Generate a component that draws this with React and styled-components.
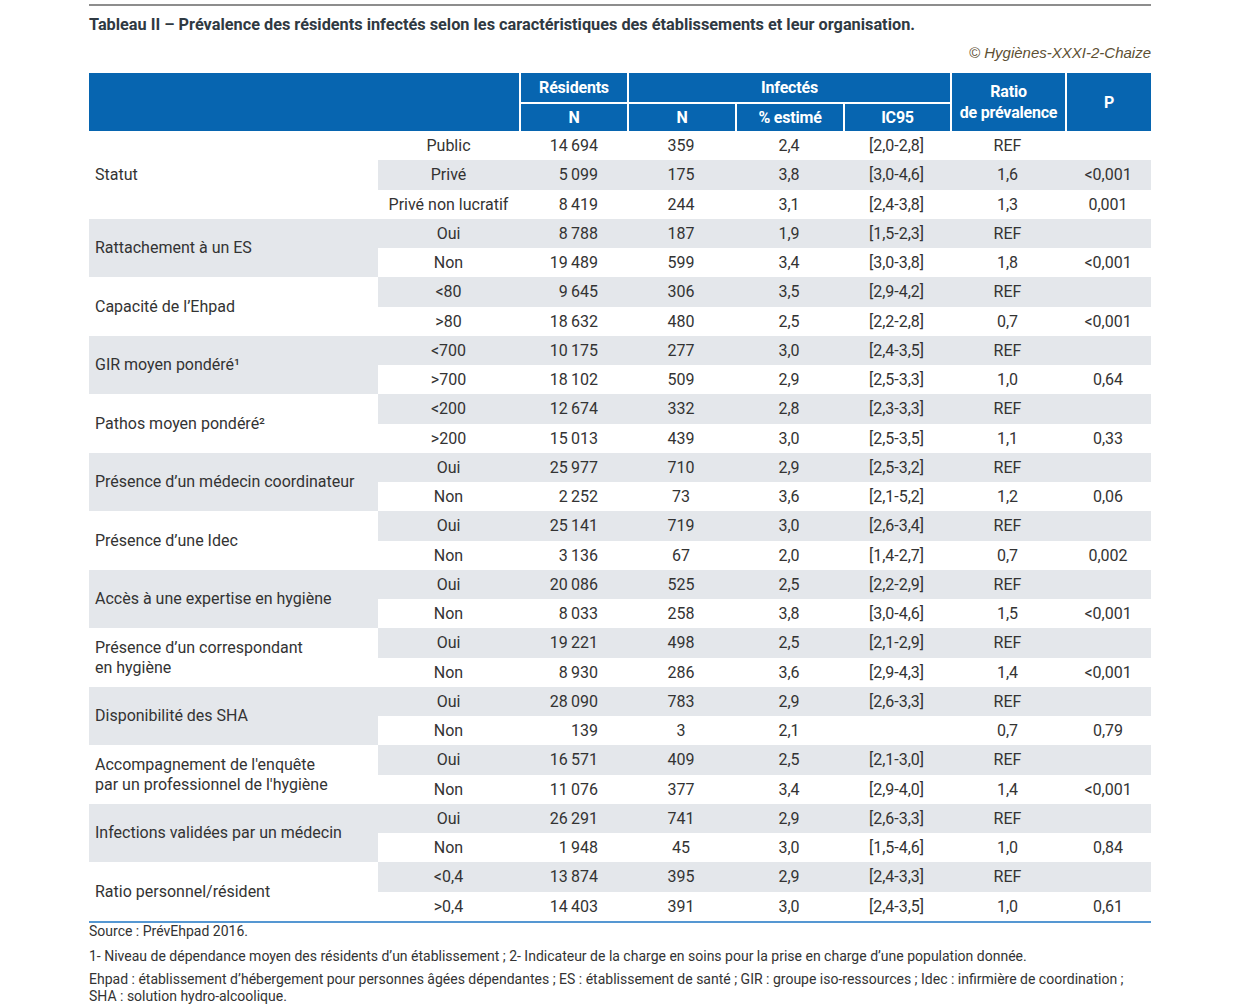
import styled, { createGlobalStyle } from "styled-components";

const GlobalStyle = createGlobalStyle`
    body {
        margin: 0;
        background: #fff;
        font-family: Roboto, "Noto Sans", sans-serif;
        color: #333;
    }
`

const BLUE = '#0765b0';
const BAND = '#e4e7eb';

const Page = styled.div`
    width: 1062px;
    margin-left: 89px;
    padding-top: 4px;
`

const TopRule = styled.div`
    height: 2px;
    background: #8d8d8d;
`

const Title = styled.h1`
    margin: 9px 0 0;
    font-size: 16.3px;
    line-height: 20px;
    font-weight: 700;
    color: #2f3942;
`

const Credit = styled.div`
    margin-top: 9px;
    text-align: right;
    font-family: "Liberation Sans", Arial, sans-serif;
    font-style: italic;
    font-size: 15px;
    line-height: 18px;
    color: #5d5033;
`

const Table = styled.table`
    margin-top: 11px;
    width: 1062px;
    table-layout: fixed;
    border-collapse: separate;
    border-spacing: 0;
    border-bottom: 2px solid #5597d2;
`

const Head = styled.th`
    background: ${BLUE};
    color: #fff;
    font-size: 16px;
    line-height: 21px;
    font-weight: 700;
    text-align: center;
    height: 29px;
    padding: 0 4px;
    box-sizing: border-box;
    border-left: ${p => p.$first ? 'none' : '2px solid #fff'};
    border-top: ${p => p.$sub ? '2px solid #fff' : 'none'};
    letter-spacing: -0.2px;
`

const Label = styled.td`
    background: ${p => p.$band ? BAND : '#fff'};
    padding: 0 6px;
    font-size: 16px;
    line-height: 20px;
    vertical-align: middle;
    text-align: left;
`

const Cell = styled.td`
    background: ${p => p.$band ? BAND : '#fff'};
    height: 29.25px;
    padding: ${p => p.$right ? '1px 29px 0 0' : '1px 0 0'};
    font-size: 16px;
    line-height: 20px;
    text-align: ${p => p.$right ? 'right' : 'center'};
    white-space: nowrap;
    box-sizing: border-box;
`

const Notes = styled.div`
    font-size: 14px;
    line-height: 17px;
    color: #333;
`

const Note = styled.p`
    margin: ${p => p.$gap}px 0 0;
`

const groups = [
    { label: ['Statut'], rows: [
        ['Public', '14 694', '359', '2,4', '[2,0-2,8]', 'REF', ''],
        ['Privé', '5 099', '175', '3,8', '[3,0-4,6]', '1,6', '<0,001'],
        ['Privé non lucratif', '8 419', '244', '3,1', '[2,4-3,8]', '1,3', '0,001'],
    ] },
    { label: ['Rattachement à un ES'], rows: [
        ['Oui', '8 788', '187', '1,9', '[1,5-2,3]', 'REF', ''],
        ['Non', '19 489', '599', '3,4', '[3,0-3,8]', '1,8', '<0,001'],
    ] },
    { label: ['Capacité de l’Ehpad'], rows: [
        ['<80', '9 645', '306', '3,5', '[2,9-4,2]', 'REF', ''],
        ['>80', '18 632', '480', '2,5', '[2,2-2,8]', '0,7', '<0,001'],
    ] },
    { label: ['GIR moyen pondéré¹'], rows: [
        ['<700', '10 175', '277', '3,0', '[2,4-3,5]', 'REF', ''],
        ['>700', '18 102', '509', '2,9', '[2,5-3,3]', '1,0', '0,64'],
    ] },
    { label: ['Pathos moyen pondéré²'], rows: [
        ['<200', '12 674', '332', '2,8', '[2,3-3,3]', 'REF', ''],
        ['>200', '15 013', '439', '3,0', '[2,5-3,5]', '1,1', '0,33'],
    ] },
    { label: ['Présence d’un médecin coordinateur'], rows: [
        ['Oui', '25 977', '710', '2,9', '[2,5-3,2]', 'REF', ''],
        ['Non', '2 252', '73', '3,6', '[2,1-5,2]', '1,2', '0,06'],
    ] },
    { label: ['Présence d’une Idec'], rows: [
        ['Oui', '25 141', '719', '3,0', '[2,6-3,4]', 'REF', ''],
        ['Non', '3 136', '67', '2,0', '[1,4-2,7]', '0,7', '0,002'],
    ] },
    { label: ['Accès à une expertise en hygiène'], rows: [
        ['Oui', '20 086', '525', '2,5', '[2,2-2,9]', 'REF', ''],
        ['Non', '8 033', '258', '3,8', '[3,0-4,6]', '1,5', '<0,001'],
    ] },
    { label: ['Présence d’un correspondant', 'en hygiène'], rows: [
        ['Oui', '19 221', '498', '2,5', '[2,1-2,9]', 'REF', ''],
        ['Non', '8 930', '286', '3,6', '[2,9-4,3]', '1,4', '<0,001'],
    ] },
    { label: ['Disponibilité des SHA'], rows: [
        ['Oui', '28 090', '783', '2,9', '[2,6-3,3]', 'REF', ''],
        ['Non', '139', '3', '2,1', '', '0,7', '0,79'],
    ] },
    { label: ['Accompagnement de l\'enquête', 'par un professionnel de l\'hygiène'], rows: [
        ['Oui', '16 571', '409', '2,5', '[2,1-3,0]', 'REF', ''],
        ['Non', '11 076', '377', '3,4', '[2,9-4,0]', '1,4', '<0,001'],
    ] },
    { label: ['Infections validées par un médecin'], rows: [
        ['Oui', '26 291', '741', '2,9', '[2,6-3,3]', 'REF', ''],
        ['Non', '1 948', '45', '3,0', '[1,5-4,6]', '1,0', '0,84'],
    ] },
    { label: ['Ratio personnel/résident'], rows: [
        ['<0,4', '13 874', '395', '2,9', '[2,4-3,3]', 'REF', ''],
        ['>0,4', '14 403', '391', '3,0', '[2,4-3,5]', '1,0', '0,61'],
    ] },
]

const thin = s => s.replace(' ', '\u2009');

const App = () => {
    let rowIndex = 0;

    return (
        <Page>
            <GlobalStyle />
            <TopRule />
            <Title>Tableau II – Prévalence des résidents infectés selon les caractéristiques des établissements et leur organisation.</Title>
            <Credit>© Hygiènes-XXXI-2-Chaize</Credit>
            <Table>
                <colgroup>
                    <col style={{ width: 289 }} />
                    <col style={{ width: 141 }} />
                    <col style={{ width: 108 }} />
                    <col style={{ width: 108 }} />
                    <col style={{ width: 108 }} />
                    <col style={{ width: 107 }} />
                    <col style={{ width: 115 }} />
                    <col style={{ width: 86 }} />
                </colgroup>
                <thead>
                    <tr>
                        <Head $first colSpan={2} rowSpan={2}></Head>
                        <Head>Résidents</Head>
                        <Head colSpan={3}>Infectés</Head>
                        <Head rowSpan={2}>Ratio<br />de prévalence</Head>
                        <Head rowSpan={2}>P</Head>
                    </tr>
                    <tr>
                        <Head $sub>N</Head>
                        <Head $sub>N</Head>
                        <Head $sub>% estimé</Head>
                        <Head $sub>IC95</Head>
                    </tr>
                </thead>
                <tbody>
                    {groups.map((g, gi) => g.rows.map((r, ri) => {
                        const band = rowIndex++ % 2 === 1;
                        return (
                            <tr key={gi + '-' + ri}>
                                {ri === 0 && (
                                    <Label rowSpan={g.rows.length} $band={gi % 2 === 1}>
                                        {g.label.map((line, li) => <div key={li}>{line}</div>)}
                                    </Label>
                                )}
                                <Cell $band={band}>{r[0]}</Cell>
                                <Cell $band={band} $right>{thin(r[1])}</Cell>
                                <Cell $band={band}>{r[2]}</Cell>
                                <Cell $band={band}>{r[3]}</Cell>
                                <Cell $band={band}>{r[4]}</Cell>
                                <Cell $band={band}>{r[5]}</Cell>
                                <Cell $band={band}>{r[6]}</Cell>
                            </tr>
                        )
                    }))}
                </tbody>
            </Table>
            <Notes>
                <Note $gap={0}>Source : PrévEhpad 2016.</Note>
                <Note $gap={8}>1- Niveau de dépendance moyen des résidents d’un établissement ; 2- Indicateur de la charge en soins pour la prise en charge d’une population donnée.</Note>
                <Note $gap={6}>Ehpad : établissement d’hébergement pour personnes âgées dépendantes ; ES : établissement de santé ; GIR : groupe iso-ressources ; Idec : infirmière de coordination ;<br />SHA : solution hydro-alcoolique.</Note>
            </Notes>
        </Page>
    )
}

export default App;
